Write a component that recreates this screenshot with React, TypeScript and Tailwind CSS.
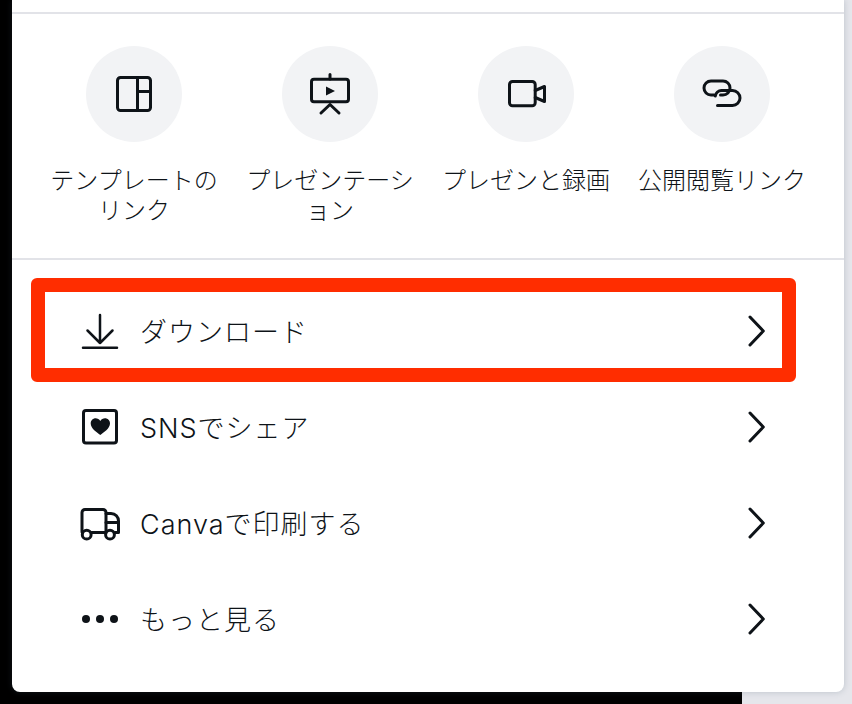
const tools = [
  {
    lines: ['テンプレートの', 'リンク'],
    icon: (
      <>
        <rect x="7.5" y="7.5" width="33" height="33" rx="3" />
        <path d="M27.5 7.5V40.5M27.5 21.5H40.5" />
      </>
    ),
  },
  {
    lines: ['プレゼンテーシ', 'ョン'],
    icon: (
      <>
        <rect x="5.5" y="9.2" width="37" height="22.6" rx="2.5" />
        <path d="M24 4.5V9M24 34.5L15 43M24 34.5L33 43" />
        <path d="M20 16.5L29 21L20 25.5Z" fill="#0e1318" stroke="none" />
      </>
    ),
  },
  {
    lines: ['プレゼンと録画'],
    icon: (
      <>
        <rect x="7.5" y="11.5" width="25.7" height="24.3" rx="3" />
        <path d="M33.2 20.5L42.5 16.5V31.5L33.2 27.5" />
      </>
    ),
  },
  {
    lines: ['公開閲覧リンク'],
    icon: (
      <>
        <path d="M16 25H13A7 7 0 0 1 13 11H25A7 7 0 0 1 25 25H22.5" />
        <path d="M19.5 35.5H34.5A7.5 7.5 0 0 0 34.5 20.5H23.5A6.5 6.5 0 0 0 17.3 26" />
      </>
    ),
  },
]

const rows = [
  {
    label: 'ダウンロード',
    icon: (
      <path strokeWidth="2.5" d="M24 8V36M11.5 23.5L24 36L36.5 23.5M7 40.7H41" />
    ),
  },
  {
    label: 'SNSでシェア',
    icon: (
      <>
        <rect x="7.5" y="7.5" width="33" height="32.5" rx="2.5" />
        <path
          d="M24.3 32C21 29.5 14.7 25.5 14.7 20.5C14.7 17.5 17 15.3 19.6 15.3C21.5 15.3 23.3 16.3 24.3 18C25.3 16.3 27.1 15.3 29 15.3C31.7 15.3 34 17.5 34 20.5C34 25.5 27.6 29.5 24.3 32Z"
          fill="#0e1318"
          stroke="none"
        />
      </>
    ),
  },
  {
    label: 'Canvaで印刷する',
    icon: (
      <>
        <path d="M6.2 33.5C6 33 6 33 6 32V13.5A3 3 0 0 1 9 10.5H27A3 3 0 0 1 30 13.5V33.5M15.5 33.5H29.5" />
        <path d="M30 14.5H35C39.5 14.5 42.5 18 42.5 22V33.5H39M30 23.5H42.5" />
        <circle cx="10.7" cy="35.7" r="4.4" />
        <circle cx="34" cy="35.7" r="4.4" />
      </>
    ),
  },
  {
    label: 'もっと見る',
    icon: (
      <>
        <circle cx="10" cy="24" r="4" fill="#0e1318" stroke="none" />
        <circle cx="24" cy="24" r="4" fill="#0e1318" stroke="none" />
        <circle cx="38" cy="24" r="4" fill="#0e1318" stroke="none" />
      </>
    ),
  },
]

function Icon({ children }: { children: React.ReactNode }) {
  return (
    <svg
      width="48"
      height="48"
      viewBox="0 0 48 48"
      fill="none"
      stroke="#0e1318"
      strokeWidth="3"
      strokeLinecap="round"
      strokeLinejoin="round"
      className="shrink-0"
    >
      {children}
    </svg>
  )
}

export default function App() {
  return (
    <div className="h-[704px] w-[852px] overflow-hidden bg-[linear-gradient(to_right,#000_742px,#e5e6eb_742px)] pl-3 pr-[8px] font-['Inter','Noto_Sans_CJK_JP',sans-serif] text-[#0e1318]">
      <div className="h-[692px] rounded-b-lg bg-white pt-3 shadow-[0_0_6px_rgba(64,87,109,0.25)]">
        <div className="grid grid-cols-[repeat(4,180px)] gap-x-4 border-y-2 border-[#e2e3e8] pb-8 pl-8 pt-8">
          {tools.map((tool) => (
            <div key={tool.lines[0]} className="flex flex-col items-center">
              <div className="flex h-24 w-24 items-center justify-center rounded-full bg-[#f2f3f5]">
                <Icon>{tool.icon}</Icon>
              </div>
              <p className="mt-6 h-[60px] whitespace-nowrap text-center text-2xl font-light leading-[30px]">
                {tool.lines.map((line) => (
                  <span key={line} className="block">
                    {line}
                  </span>
                ))}
              </p>
            </div>
          ))}
        </div>

        <div className="relative pl-16 pr-[63px] pt-[23px]">
          <div className="absolute left-[19px] top-[18px] h-[104px] w-[765px] rounded-md border-[14px] border-[#ff2d00]" />
          {rows.map((row) => (
            <div key={row.label} className="flex h-24 items-center">
              <Icon>{row.icon}</Icon>
              <span className="ml-4 flex-1 pt-[5px] text-[27px] font-light tracking-[1px]">{row.label}</span>
              <svg
                width="48"
                height="48"
                viewBox="0 0 48 48"
                fill="none"
                stroke="#0e1318"
                strokeWidth="3"
                strokeLinecap="round"
                strokeLinejoin="round"
              >
                <path d="M17 10L30.3 24L17 38" />
              </svg>
            </div>
          ))}
        </div>
      </div>
    </div>
  )
}
